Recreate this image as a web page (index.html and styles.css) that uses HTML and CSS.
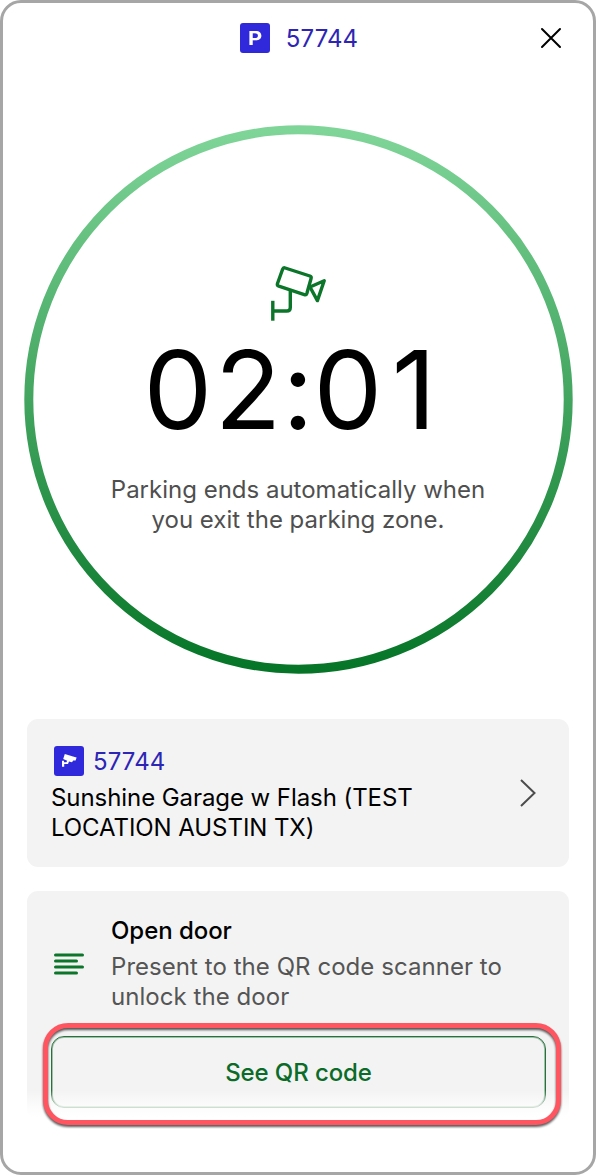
FILE: index.html
```html
<!DOCTYPE html>
<html lang="en">
<head>
    <meta charset="UTF-8">
    <meta name="viewport" content="width=device-width, initial-scale=1.0">
    <title>Parking 57744</title>

    <link rel="stylesheet" href="styles.css">

</head>
<body>
    <div class="screen">
        <header class="header">
            <div class="zone">
                <span class="badge badge-p"><span class="letter">P</span></span>
                <span class="zone-number">57744</span>
            </div>
            <svg class="close" width="22" height="22" viewBox="0 0 22 22">
                <path d="M2 2L20 20M20 2L2 20" fill="none" stroke="#000" stroke-width="2" stroke-linecap="round"/>
            </svg>
        </header>

        <main class="content">
            <div class="timer">
                <svg class="ring" width="550" height="550" viewBox="0 0 550 550">
                    <defs>
                        <linearGradient id="ringColor" x1="0" y1="0" x2="0" y2="1">
                            <stop offset="0" stop-color="#7fd598"/>
                            <stop offset="1" stop-color="#067527"/>
                        </linearGradient>
                    </defs>
                    <circle cx="275.5" cy="275.5" r="269.7" fill="none" stroke="url(#ringColor)" stroke-width="9"/>
                </svg>
                <svg class="camera" width="60" height="60" viewBox="0 0 60 60">
                    <g fill="none" stroke="#0b7529" stroke-width="3.4" stroke-linejoin="round" stroke-linecap="round">
                        <path d="M17.2 6L41.9 14Q43.7 14.7 43 16.7L38.9 31.3Q38.2 33.2 36.3 32.6L10.8 24.2Q8.9 23.5 9.5 21.5L14.6 7.3Q15.3 5.4 17.2 6Z"/>
                        <path d="M42 25L56.2 18.8L49.4 38.6Z"/>
                        <path d="M22.3 29.5V45.4Q22.3 49 18.7 49H6"/>
                        <path d="M4.8 40.5V57" stroke-linecap="square"/>
                    </g>
                </svg>
                <div class="time">
                    <span class="digit">0</span><span class="digit">2</span><span class="colon">:</span><span class="digit">0</span><span class="digit one">1</span>
                </div>
                <p class="timer-text">Parking ends automatically when<br>you exit the parking zone.</p>
            </div>

            <section class="card garage">
                <div class="garage-info">
                    <div class="garage-zone">
                        <span class="badge">
                            <svg width="18" height="16" viewBox="0 0 18 16">
                                <path d="M4.8 1L13 3.4L16.6 4.6L15.6 7.6L13.2 7.4L12 9.2L9 8.6L8 11H4.2V13.8H2V7.8H4V9.2H6.4L7.2 7.8L3.2 6Z" fill="#fff"/>
                            </svg>
                        </span>
                        <span class="zone-number">57744</span>
                    </div>
                    <p class="garage-name">Sunshine Garage w Flash (TEST<br>LOCATION AUSTIN TX)</p>
                </div>
                <svg class="chevron" width="20" height="30" viewBox="0 0 20 30">
                    <path d="M3 2L16.5 15L3 28" fill="none" stroke="#4c4c4c" stroke-width="2"/>
                </svg>
            </section>

            <section class="card door">
                <div class="door-row">
                    <svg class="lines" width="30" height="22" viewBox="0 0 30 22">
                        <path d="M1.5 1.9H28.5M1.5 7.9H22.5M1.5 13.9H28.5M1.5 19.9H22.5" stroke="#0b7529" stroke-width="3" stroke-linecap="round"/>
                    </svg>
                    <div class="door-text">
                        <h2>Open door</h2>
                        <p>Present to the QR code scanner to<br>unlock the door</p>
                    </div>
                </div>
                <button class="qr-button">See QR code</button>
                <div class="fade"></div>
                <div class="highlight"></div>
            </section>
        </main>
    </div>
</body>
</html>
```
FILE: styles.css
```css
* {
    box-sizing: border-box;
}

body {
    margin: 0;
    background-color: #fff;
    font-family: Inter, "Liberation Sans", sans-serif;
    font-size: 24px;
    font-weight: 400;
    line-height: 30px;
    color: #000;
}

h2, p {
    margin: 0;
}

.screen {
    height: 1175px;
    border: 3px solid #a6a6a6;
    border-radius: 21px;
    background-color: #fff;
}

.header {
    display: grid;
    grid-template-columns: 1fr auto 1fr;
    align-items: center;
    height: 70px;
    padding: 0 31px 0 33px;
}

.zone {
    grid-column: 2;
    display: flex;
    align-items: center;
    gap: 16px;
}

.close {
    justify-self: end;
}

.badge {
    display: flex;
    align-items: center;
    justify-content: center;
    width: 30px;
    height: 30px;
    border-radius: 3px;
    background-color: #3029dc;
}

.badge-p {
    color: #fff;
    font-size: 19px;
    font-weight: 700;
}

.letter {
    padding-top: 1px;
    transform: scaleX(1.15);
}

.zone-number {
    padding-top: 2px;
    color: #2d25b5;
    letter-spacing: 0.1px;
}

.content {
    display: flex;
    flex-direction: column;
    padding: 51px 24px 0;
}

.timer {
    position: relative;
    display: flex;
    flex-direction: column;
    align-items: center;
    align-self: center;
    width: 550px;
    height: 550px;
    margin: 0 -2px;
    padding-top: 138px;
}

.ring {
    position: absolute;
    top: 0;
    left: 0;
}

.time {
    display: flex;
    height: 120px;
    margin-top: 7px;
    font-size: 109px;
    line-height: 120px;
}

.digit, .colon {
    display: flex;
    justify-content: center;
    width: 70px;
}

.colon {
    width: 30px;
}

.one {
    padding-right: 8px;
}

.timer-text {
    margin-top: 26px;
    color: #4f4f4f;
    text-align: center;
}

.card {
    border-radius: 11px;
    background-color: #f3f3f3;
}

.garage {
    display: flex;
    align-items: center;
    justify-content: space-between;
    height: 148px;
    margin-top: 45px;
    padding: 0 31px 0 24px;
}

.garage-info {
    padding-top: 2px;
}

.garage-zone {
    display: flex;
    align-items: center;
    gap: 9px;
    margin: 0 0 6px 3px;
}

.garage-name {
    letter-spacing: -0.07px;
}

.door {
    position: relative;
    height: 229px;
    margin-top: 24px;
    padding: 25px 24px 0;
}

.door-row {
    display: flex;
    align-items: center;
    gap: 27px;
    height: 96px;
    padding-left: 3px;
}

.door-text h2 {
    margin-bottom: 6px;
    font-size: 24px;
    font-weight: 500;
    letter-spacing: -0.05px;
}

.door-text p {
    color: #555;
    letter-spacing: 0.05px;
}

.qr-button {
    display: block;
    width: 495px;
    height: 72px;
    margin-top: 24px;
    border: 1px solid #27713b;
    border-radius: 13px;
    background: none;
    box-shadow: inset 0 0 0 1px rgba(39, 113, 59, 0.4);
    color: #0b6b28;
    font-family: inherit;
    font-size: 24px;
    font-weight: 500;
    letter-spacing: -0.1px;
}

/* bottom of the scroll area fades out */
.fade {
    position: absolute;
    left: 0;
    right: 0;
    bottom: 0;
    height: 30px;
    background: linear-gradient(rgba(255, 255, 255, 0), rgba(255, 255, 255, 0.75) 55%, #fff 90%);
}

.highlight {
    position: absolute;
    top: 132px;
    left: 16px;
    width: 518px;
    height: 102px;
    border: 5px solid #ff5560;
    border-radius: 25px;
    filter: drop-shadow(0 2px 1px rgba(0, 0, 0, 0.65));
}
```
